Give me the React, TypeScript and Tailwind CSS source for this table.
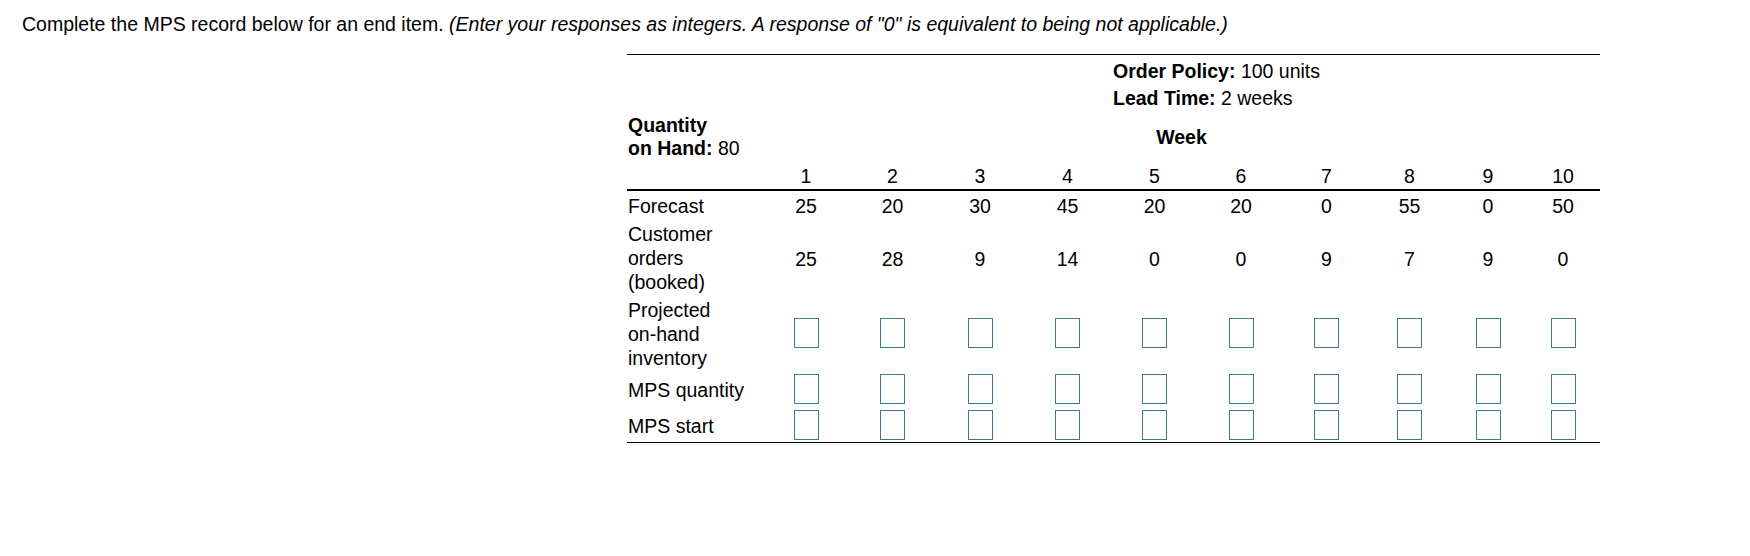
import React from "react";

const cols = "grid grid-cols-[136px_86px_87px_88px_87px_87px_86px_85px_81px_76px_74px]";

const forecast = [25, 20, 30, 45, 20, 20, 0, 55, 0, 50];
const booked = [25, 28, 9, 14, 0, 0, 9, 7, 9, 0];
const weeks = [1, 2, 3, 4, 5, 6, 7, 8, 9, 10];

function Label({ lines }: { lines: string[] }) {
  return (
    <div className="pl-[1px] whitespace-nowrap">
      {lines.map((l) => (
        <div key={l}>{l}</div>
      ))}
    </div>
  );
}

function Box() {
  return <div className="w-[25px] h-[30px] border border-[#3b7d84] bg-white" />;
}

function InputRow({ lines, height }: { lines: string[]; height: string }) {
  return (
    <div className={`${cols} ${height}`}>
      <div className="flex items-center pt-[2px]">
        <Label lines={lines} />
      </div>
      {weeks.map((w) => (
        <div key={w} className="flex items-center justify-center">
          <Box />
        </div>
      ))}
    </div>
  );
}

export default function App() {
  return (
    <div className="min-h-[556px] bg-white text-black font-['Liberation_Sans',Arial,sans-serif] text-[19.5px] leading-6">
      <div className="pt-[12px] pl-[22px] whitespace-nowrap">
        Complete the MPS record below for an end item.{" "}
        <i>(Enter your responses as integers. A response of "0" is equivalent to being not applicable.)</i>
      </div>

      <div className="ml-[627px] mt-[18px] w-[973px] border-t border-b border-black">
        {/* policy header */}
        <div className={`${cols} h-[57px]`}>
          <div className="col-start-6 col-span-6 pt-[4px] pl-[2px] flex flex-col gap-[3px] whitespace-nowrap">
            <div>
              <b>Order Policy:</b> 100 units
            </div>
            <div>
              <b>Lead Time:</b> 2 weeks
            </div>
          </div>
        </div>

        <div className={`${cols} h-[48px]`}>
          <div className="pt-[2px] leading-[23px] pl-[1px] whitespace-nowrap">
            <div className="font-bold">Quantity</div>
            <div>
              <b>on Hand:</b> 80
            </div>
          </div>
          <div className="col-span-10 flex items-center justify-center pt-[2px] font-bold">Week</div>
        </div>

        <div className={`${cols} h-[31px] border-b-2 border-black`}>
          <div />
          {weeks.map((w) => (
            <div key={w} className="pt-[4px] text-center">
              {w}
            </div>
          ))}
        </div>

        <div className={`${cols} h-[29px]`}>
          <div className="pt-[3px]">
            <Label lines={["Forecast"]} />
          </div>
          {forecast.map((v, i) => (
            <div key={i} className="pt-[3px] text-center">
              {v}
            </div>
          ))}
        </div>

        <div className={`${cols} h-[75px]`}>
          <div className="pt-[2px]">
            <Label lines={["Customer", "orders", "(booked)"]} />
          </div>
          {booked.map((v, i) => (
            <div key={i} className="flex items-center justify-center pt-[3px]">
              {v}
            </div>
          ))}
        </div>

        <InputRow lines={["Projected", "on-hand", "inventory"]} height="h-[75px]" />
        <InputRow lines={["MPS quantity"]} height="h-[38px]" />
        <InputRow lines={["MPS start"]} height="h-[34px]" />
      </div>
    </div>
  );
}
